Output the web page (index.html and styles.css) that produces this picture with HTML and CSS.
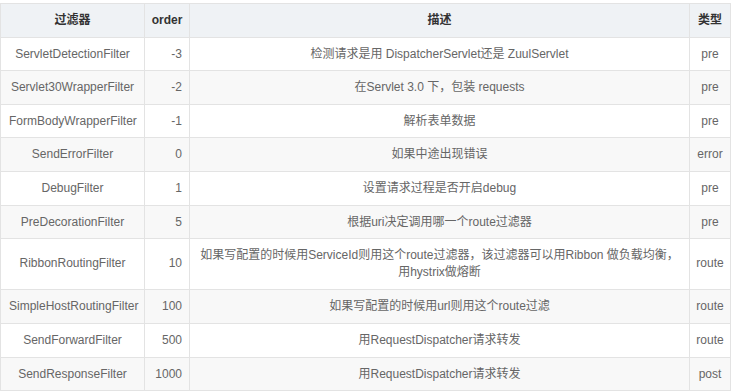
FILE: index.html
```html
<!DOCTYPE html>
<html lang="zh">
<head>
<meta charset="utf-8">
<link rel="stylesheet" href="styles.css">
</head>
<body>
<table class="grid">
  <colgroup>
    <col class="c-name">
    <col class="c-order">
    <col class="c-desc">
    <col class="c-type">
  </colgroup>
  <thead>
    <tr><th>过滤器</th><th>order</th><th>描述</th><th>类型</th></tr>
  </thead>
  <tbody>
    <tr><td>ServletDetectionFilter</td><td class="num">-3</td><td>检测请求是用 DispatcherServlet还是 ZuulServlet</td><td>pre</td></tr>
    <tr><td>Servlet30WrapperFilter</td><td class="num">-2</td><td>在Servlet 3.0 下，包装 requests</td><td>pre</td></tr>
    <tr><td>FormBodyWrapperFilter</td><td class="num">-1</td><td>解析表单数据</td><td>pre</td></tr>
    <tr><td>SendErrorFilter</td><td class="num">0</td><td>如果中途出现错误</td><td>error</td></tr>
    <tr><td>DebugFilter</td><td class="num">1</td><td>设置请求过程是否开启debug</td><td>pre</td></tr>
    <tr><td>PreDecorationFilter</td><td class="num">5</td><td>根据uri决定调用哪一个route过滤器</td><td>pre</td></tr>
    <tr class="tall"><td>RibbonRoutingFilter</td><td class="num">10</td><td>如果写配置的时候用ServiceId则用这个route过滤器，该过滤器可以用Ribbon 做负载均衡，用hystrix做熔断</td><td>route</td></tr>
    <tr><td>SimpleHostRoutingFilter</td><td class="num">100</td><td>如果写配置的时候用url则用这个route过滤</td><td>route</td></tr>
    <tr><td>SendForwardFilter</td><td class="num">500</td><td>用RequestDispatcher请求转发</td><td>route</td></tr>
    <tr><td>SendResponseFilter</td><td class="num">1000</td><td>用RequestDispatcher请求转发</td><td>post</td></tr>
  </tbody>
</table>
</body>
</html>
```
FILE: styles.css
```css
html, body {
  margin: 0;
  padding: 0;
  background: #ffffff;
}
body {
  padding-top: 3px;
  font-family: "Liberation Sans", Arial, "Noto Sans CJK SC", sans-serif;
  font-size: 12px;
  color: #666666;
}
.grid {
  border-collapse: collapse;
  table-layout: fixed;
  width: 730px;
}
.c-name { width: 144px; }
.c-order { width: 45px; }
.c-desc { width: 500px; }
.c-type { width: 41px; }
.grid th,
.grid td {
  border: 1px solid #e3e3e3;
  padding: 8px 8px;
  line-height: 16.6px;
  text-align: center;
  vertical-align: middle;
  white-space: nowrap;
  overflow: visible;
}
.grid th {
  background: #eff2f5;
  color: #333333;
  font-weight: bold;
  padding: 8px 4px;
}
.grid td.num {
  text-align: right;
  padding-right: 7px;
}
.grid td:last-child {
  padding: 8px 2px;
}
.grid tbody tr:nth-child(even) td {
  background: #f8f8f8;
}
.grid tr.tall td {
  white-space: normal;
  padding-top: 8px;
  padding-bottom: 9px;
}
.grid tr.tall td:nth-child(3) {
  padding-left: 9px;
  padding-right: 9px;
}
```
